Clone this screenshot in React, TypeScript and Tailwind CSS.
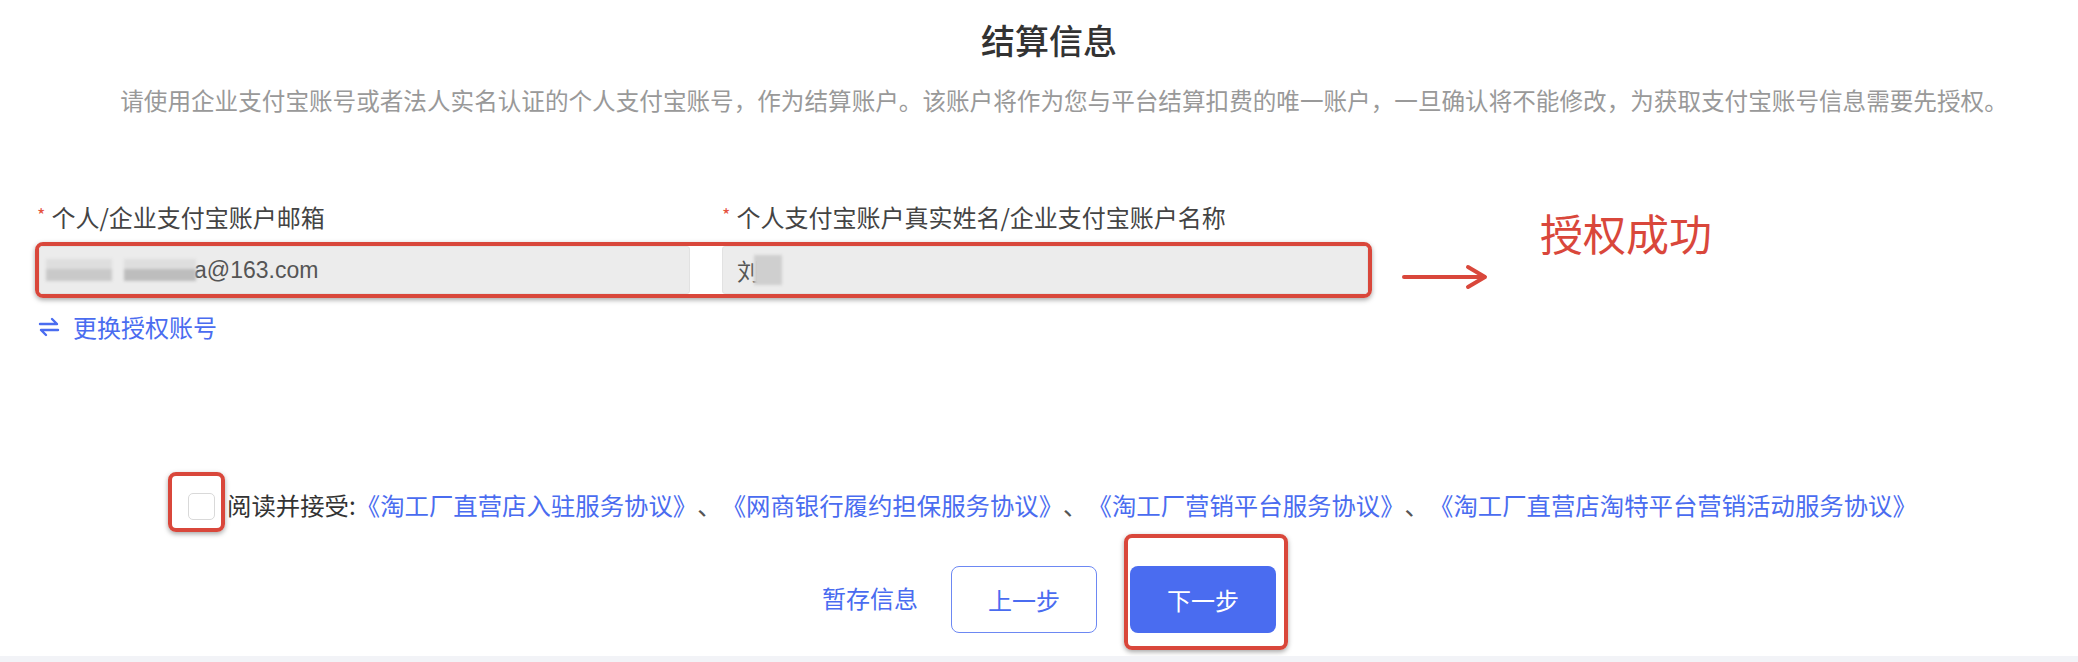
import React from 'react';

const agreements = [
  '《淘工厂直营店入驻服务协议》',
  '《网商银行履约担保服务协议》',
  '《淘工厂营销平台服务协议》',
  '《淘工厂直营店淘特平台营销活动服务协议》',
];

const SwapIcon = () => (
  <svg width="22" height="22" viewBox="0 0 22 22" fill="none" stroke="#4a6cf0" strokeWidth="2.4" strokeLinecap="round" strokeLinejoin="round">
    <path d="M2 8h17l-5-5" />
    <path d="M20 14H3l5 5" />
  </svg>
);

const RedArrow = () => (
  <svg width="88" height="30" viewBox="0 0 88 30" fill="none" stroke="#d9473b" strokeWidth="4" strokeLinecap="round" strokeLinejoin="round">
    <path d="M3 15h80" />
    <path d="M67 5l17 10-17 10" />
  </svg>
);

const Blur = ({ w, tone = 'bg-[#c9c9c9]' }: { w: string; tone?: string }) => (
  <div className={`${w} flex flex-col blur-[1.5px]`}>
    <div className="h-[10px] bg-[#dedede]" />
    <div className={`h-[12px] ${tone}`} />
  </div>
);

export default function App() {
  return (
    <div className="w-full h-[662px] bg-white flex flex-col font-['Noto_Sans_CJK_SC',sans-serif] text-[#333]">
      {/* header */}
      <div className="pt-[19px] pl-[20px] text-center text-[34px] leading-[41px] font-medium text-[#333]">结算信息</div>
      <div className="mt-[24px] pl-[50px] text-center text-[23.6px] leading-[32px] text-[#999]">
        请使用企业支付宝账号或者法人实名认证的个人支付宝账号，作为结算账户。该账户将作为您与平台结算扣费的唯一账户，一旦确认将不能修改，为获取支付宝账号信息需要先授权。
      </div>

      {/* form */}
      <div className="mt-[85px] flex items-start">
        <div className="ml-[35px] w-[1337px] flex flex-col">
          <div className="flex h-[32px] items-center text-[24px] leading-[32px] text-[#444]">
            <div className="w-[687px] flex items-center">
              <span className="text-[#e5533f] text-[18px] ml-[2px] mr-[6px] -mt-[6px]">*</span>
              个人/企业支付宝账户邮箱
            </div>
            <div className="flex items-center">
              <span className="text-[#e5533f] text-[18px] mr-[6px] -mt-[6px]">*</span>
              个人支付宝账户真实姓名/企业支付宝账户名称
            </div>
          </div>
          <div className="mt-[9px] h-[56px] flex border-[4px] border-[#d9473b] rounded-[8px] shadow-[0_2px_5px_rgba(0,0,0,0.35)] overflow-hidden">
            <div className="w-[651px] h-full bg-[#ececec] border border-[#e2e2e2] rounded-[3px] flex items-center pl-[6px] text-[23px] text-[#555]">
              <div className="flex items-end gap-[12px]">
                <Blur w="w-[66px]" />
                <Blur w="w-[72px]" tone="bg-[#bdbdbd]" />
              </div>
              <span className="font-['Liberation_Sans',sans-serif] -ml-[2px]">a@163.com</span>
            </div>
            <div className="w-[32px] h-full bg-white" />
            <div className="flex-1 h-full bg-[#ececec] border border-[#e2e2e2] rounded-[3px] flex items-center pl-[14px] text-[23px] text-[#555]">
              <span>刘</span>
              <div className="w-[28px] h-[30px] bg-[#cfcfcf] blur-[1.5px] -ml-[6px]" />
            </div>
          </div>
          <div className="mt-[13px] flex items-center h-[32px] ml-[3px] text-[24px] leading-[32px] text-[#4a6cf0]">
            <SwapIcon />
            <span className="ml-[13px]">更换授权账号</span>
          </div>
        </div>
        <div className="flex flex-col pt-[6px]">
          <div className="ml-[168px] text-[43px] leading-[50px] text-[#d9473b] whitespace-nowrap">授权成功</div>
          <div className="ml-[29px] mt-[5px]">
            <RedArrow />
          </div>
        </div>
      </div>

      {/* agreement */}
      <div className="mt-[129px] ml-[168px] flex items-center">
        <div className="w-[57px] h-[60px] border-[4px] border-[#d9473b] rounded-[8px] shadow-[0_2px_5px_rgba(0,0,0,0.35)] flex items-end justify-end pr-[6px] pb-[8px]">
          <div className="w-[27px] h-[27px] bg-white border-[1.5px] border-[#d9d9d9] rounded-[5px]" />
        </div>
        <div className="ml-[2px] mt-[6px] text-[24.4px] leading-[32px] whitespace-nowrap">
          <span className="text-[#333]">阅读并接受:</span>
          {agreements.map((a, i) => (
            <React.Fragment key={a}>
              {i > 0 && <span className="inline-block text-[#555]">、</span>}
              <span className="text-[#4a6cf0]">{a}</span>
            </React.Fragment>
          ))}
        </div>
      </div>

      {/* actions */}
      <div className="mt-[2px] flex justify-center items-start pl-[32px] text-[24px]">
        <div className="mt-[48px] leading-[32px] text-[#4a6cf0]">暂存信息</div>
        <button className="ml-[33px] mt-[32px] w-[146px] h-[67px] border-[1.5px] border-[#6d88f3] rounded-[8px] text-[#4a6cf0] bg-white">上一步</button>
        <div className="ml-[27px] border-[4px] border-[#d9473b] rounded-[8px] shadow-[0_2px_5px_rgba(0,0,0,0.35)] pt-[28px] pb-[13px] pl-[2px] pr-[8px]">
          <button className="w-[146px] h-[67px] rounded-[8px] bg-[#4a6cf0] text-white">下一步</button>
        </div>
      </div>

      <div className="flex-1" />
      <div className="h-[6px] bg-[#f2f3f7]" />
    </div>
  );
}
